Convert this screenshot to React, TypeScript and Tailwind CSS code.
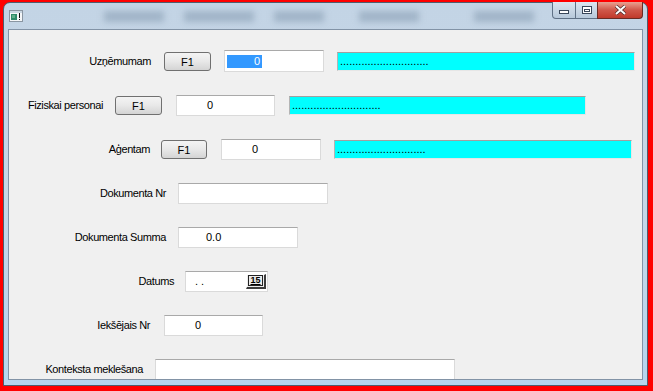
import type { ReactNode } from 'react'

function Label({ className, children }: { className: string; children: ReactNode }) {
  return <div className={`shrink-0 text-right whitespace-nowrap tracking-[-0.4px] ${className}`}>{children}</div>
}

function Field({ className, children }: { className: string; children?: ReactNode }) {
  return (
    <div className={`h-[21px] shrink-0 bg-white border border-[#dadada] border-t-[#a9a9a9] flex items-center ${className}`}>
      {children}
    </div>
  )
}

function F1Button({ className }: { className: string }) {
  return (
    <div
      className={`h-[19px] shrink-0 rounded-[3px] border border-[#707070] bg-gradient-to-b from-[#f4f4f4] via-[#e8e8e8] to-[#d4d4d4] flex items-center justify-center pt-[3px] ${className}`}
    >
      F1
    </div>
  )
}

function Lookup({ className }: { className: string }) {
  return (
    <div className={`h-[19px] shrink-0 bg-[#00ffff] border border-[#e6e6e6] border-t-[#a0a0a0] border-l-[#b4b4b4] flex items-center pl-[2px] pt-[1px] ${className}`}>
      .............................
    </div>
  )
}

function AppIcon() {
  return (
    <svg width="14" height="12" viewBox="0 0 14 12">
      <rect x="0.5" y="0.5" width="13" height="11" fill="#f4f6f8" stroke="#8a96a2" />
      <rect x="1" y="1" width="12" height="2" fill="#c9d6e2" />
      <rect x="2" y="4" width="6" height="6" fill="#2f8a6a" />
      <rect x="3" y="5" width="3" height="3" fill="#5fb08a" />
      <rect x="10" y="3" width="1" height="5" fill="#111" />
      <rect x="10" y="9" width="1" height="1" fill="#111" />
    </svg>
  )
}

function CaptionButtons() {
  return (
    <div className="flex -mt-[1px] mr-[4px] h-[17px]">
      <div className="w-[24px] h-full rounded-bl-[4px] border border-[#5f7186] border-t-0 bg-gradient-to-b from-[#dbe5ef] to-[#b7c9db] flex items-center justify-center">
        <div className="w-[10px] h-[4px] mt-[3px] border border-[#39475a] bg-white" />
      </div>
      <div className="w-[21px] h-full border-y border-[#5f7186] border-t-0 bg-gradient-to-b from-[#dbe5ef] to-[#b7c9db] flex items-center justify-center">
        <div className="w-[10px] h-[8px] border border-[#39475a] bg-white flex items-center justify-center">
          <div className="w-[6px] h-[3px] border border-[#39475a]" />
        </div>
      </div>
      <div className="w-[46px] h-full rounded-br-[4px] border border-[#6a2b24] border-t-0 bg-gradient-to-b from-[#e8a091] via-[#d0574a] to-[#c0392b] flex items-center justify-center">
        <svg width="13" height="10" viewBox="0 0 13 10">
          <path d="M2 1 L11 9 M11 1 L2 9" stroke="#4a2a2a" strokeWidth="3.4" />
          <path d="M2 1 L11 9 M11 1 L2 9" stroke="#ffffff" strokeWidth="2" />
        </svg>
      </div>
    </div>
  )
}

function DatePicker() {
  return (
    <div className="ml-[11px] w-[83px] h-[21px] shrink-0 bg-white border border-[#dadada] border-t-[#a9a9a9] flex items-center justify-between">
      <span className="pl-[9px]">. .</span>
      <div className="mr-[1px] w-[20px] h-[15px] bg-[#ececec] border-t border-l border-white border-r-2 border-b-2 border-r-[#3c3c3c] border-b-[#3c3c3c] flex items-center justify-center">
        <span className="border border-[#222] px-[1px] leading-[9px] text-[9px] font-bold underline">15</span>
      </div>
    </div>
  )
}

export default function App() {
  return (
    <div className="w-[653px] h-[391px] bg-[#f00] pt-[2px] pl-[3px] overflow-hidden font-['Liberation_Sans',Arial,sans-serif] text-[11px] text-black">
      <div className="w-[645px] h-[384px] rounded-t-[7px] border border-[#4e5d6e] bg-gradient-to-b from-[#c3d4e5] via-[#c6d7e8] to-[#b6d5ee] flex flex-col">
        <div className="relative h-[26px] shrink-0 flex items-start justify-between">
          <div className="absolute left-[100px] top-[8px] w-[60px] h-[11px] bg-[#8095ab]/50 blur-[3px]" />
          <div className="absolute left-[180px] top-[8px] w-[70px] h-[11px] bg-[#8095ab]/50 blur-[3px]" />
          <div className="absolute left-[270px] top-[8px] w-[50px] h-[11px] bg-[#8095ab]/50 blur-[3px]" />
          <div className="absolute left-[355px] top-[8px] w-[60px] h-[11px] bg-[#8095ab]/50 blur-[3px]" />
          <div className="absolute left-[470px] top-[8px] w-[60px] h-[11px] bg-[#8095ab]/50 blur-[3px]" />
          <div className="relative ml-[5px] mt-[7px]">
            <AppIcon />
          </div>
          <div className="relative">
            <CaptionButtons />
          </div>
        </div>

        <div className="ml-[4px] w-[635px] h-[351px] shrink-0 border border-[#8293a6] bg-[#f0f0f0] overflow-hidden flex flex-col">
          <div className="mt-[20px] h-[22px] flex items-center shrink-0">
            <Label className="w-[142px]">Uzņēmumam</Label>
            <F1Button className="ml-[13px] w-[47px]" />
            <Field className="ml-[13px] w-[100px] h-[22px]">
              <div className="ml-[2px] w-[35px] h-[13px] bg-[#3399ff] text-white text-right pr-[2px] leading-[13px]">0</div>
            </Field>
            <Lookup className="ml-[13px] w-[298px]" />
          </div>

          <div className="mt-[22px] h-[22px] flex items-center shrink-0">
            <Label className="w-[94px]">Fiziskai personai</Label>
            <F1Button className="ml-[12px] w-[47px]" />
            <Field className="ml-[14px] w-[99px]">
              <span className="pl-[30px]">0</span>
            </Field>
            <Lookup className="ml-[14px] w-[297px]" />
          </div>

          <div className="mt-[22px] h-[22px] flex items-center shrink-0">
            <Label className="w-[141px]">Aģentam</Label>
            <F1Button className="ml-[11px] w-[46px]" />
            <Field className="ml-[14px] w-[100px]">
              <span className="pl-[30px]">0</span>
            </Field>
            <Lookup className="ml-[13px] w-[298px]" />
          </div>

          <div className="mt-[22px] h-[22px] flex items-center shrink-0">
            <Label className="w-[157px]">Dokumenta Nr</Label>
            <Field className="ml-[12px] w-[150px]" />
          </div>

          <div className="mt-[22px] h-[22px] flex items-center shrink-0">
            <Label className="w-[157px]">Dokumenta Summa</Label>
            <Field className="ml-[12px] w-[120px]">
              <span className="pl-[27px]">0.0</span>
            </Field>
          </div>

          <div className="mt-[22px] h-[22px] flex items-center shrink-0">
            <Label className="w-[165px]">Datums</Label>
            <DatePicker />
          </div>

          <div className="mt-[22px] h-[22px] flex items-center shrink-0">
            <Label className="w-[141px]">Iekšējais Nr</Label>
            <Field className="ml-[14px] w-[99px]">
              <span className="pl-[30px]">0</span>
            </Field>
          </div>

          <div className="mt-[22px] h-[22px] flex items-center shrink-0">
            <Label className="w-[134px]">Konteksta meklešana</Label>
            <Field className="ml-[12px] w-[300px]" />
          </div>
        </div>
      </div>
    </div>
  )
}
